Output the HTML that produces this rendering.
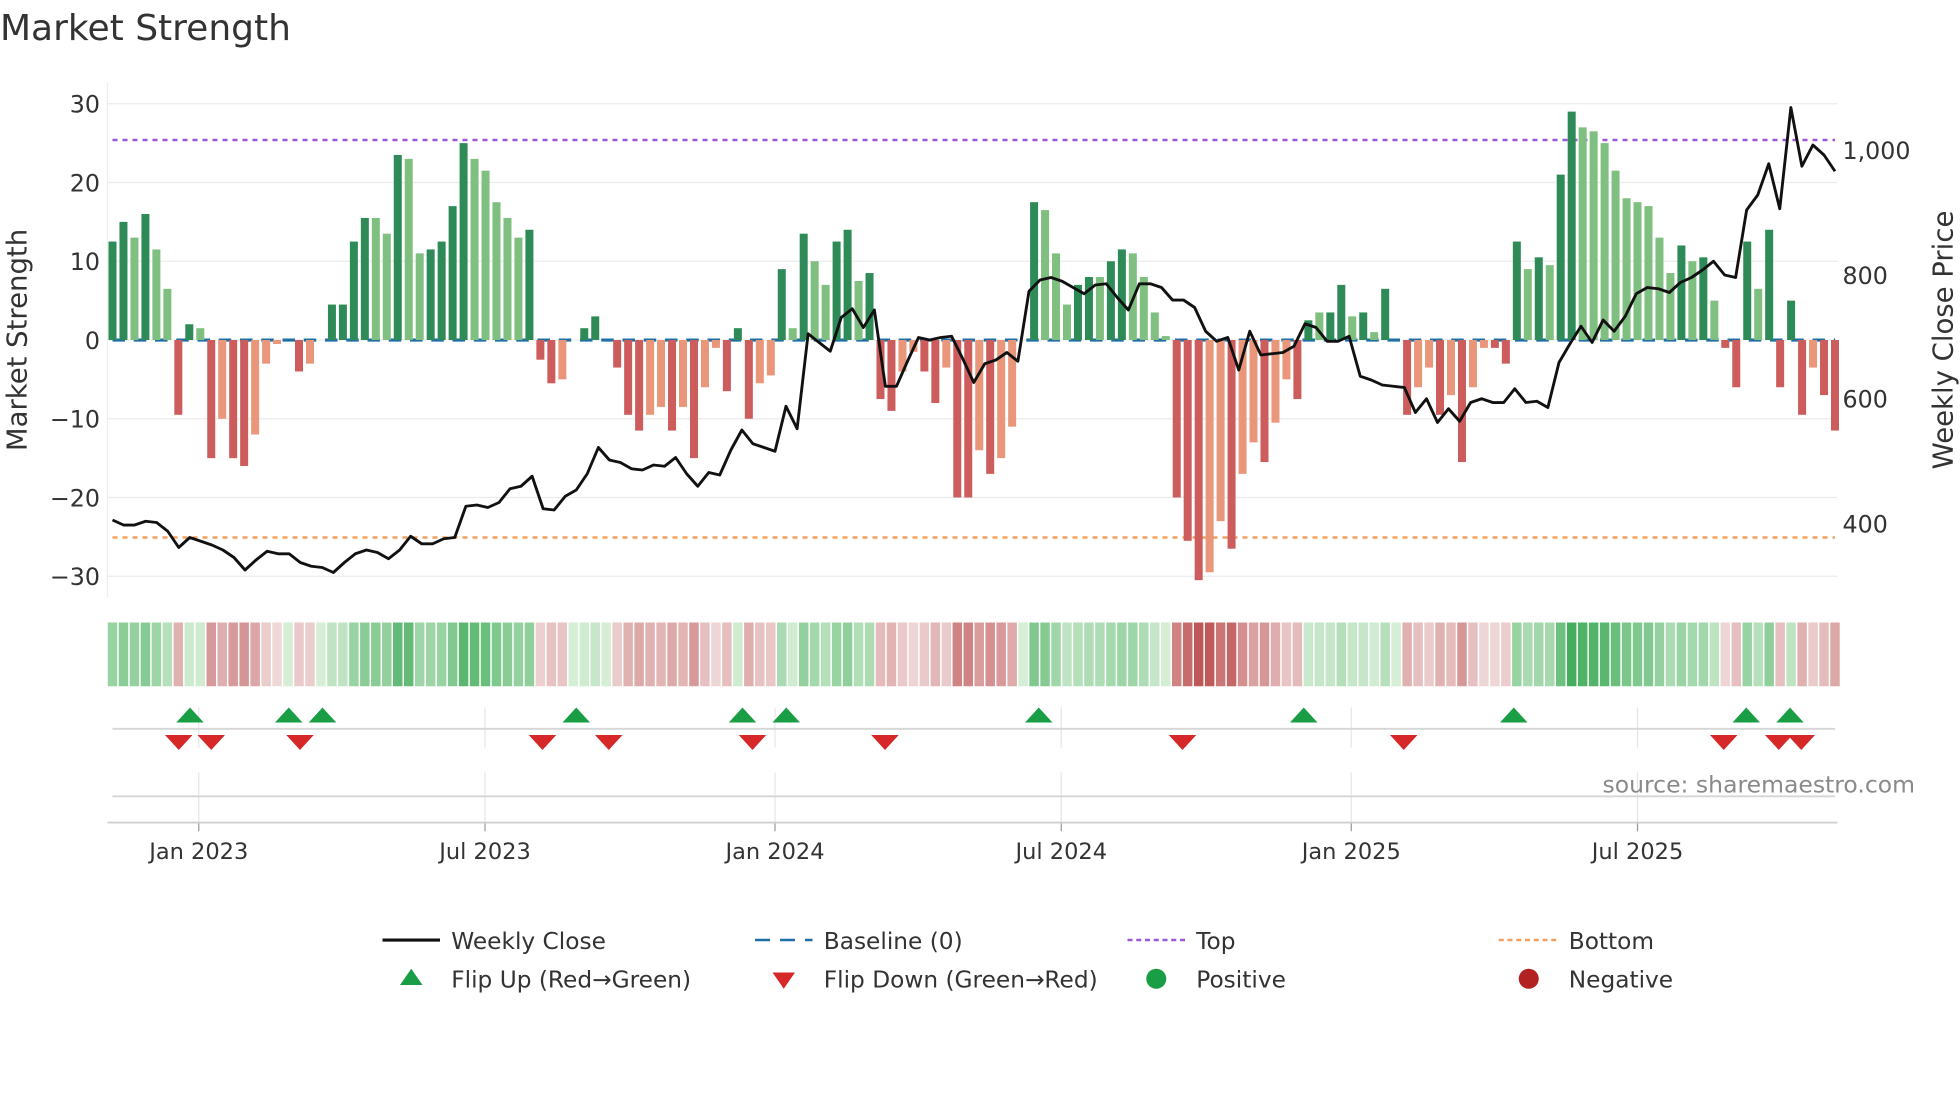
<!DOCTYPE html>
<html><head><meta charset="utf-8"><style>
html,body{margin:0;padding:0;background:#fff;width:1960px;height:1102px;overflow:hidden}
svg{display:block;font-family:"DejaVu Sans","Liberation Sans",sans-serif}
</style></head><body>
<svg id="s" width="1960" height="1102" viewBox="0 0 1568 881.6" xmlns="http://www.w3.org/2000/svg">
<text x="0" y="32" font-size="28.8" fill="#333">Market Strength</text>
<g id="g"></g>
<text x="1282" y="634" font-size="18.8" fill="#8a8a8a">source: sharemaestro.com</text>
<g font-size="18.6" fill="#333">
<line x1="306" y1="752" x2="352" y2="752" stroke="#111" stroke-width="2.5"/><text x="361" y="759">Weekly Close</text>
<line x1="604" y1="752" x2="650" y2="752" stroke="#1f6fa5" stroke-width="2" stroke-dasharray="12,8"/><text x="659" y="759">Baseline (0)</text>
<line x1="902" y1="752" x2="948" y2="752" stroke="#9b59d6" stroke-width="2" stroke-dasharray="4,3"/><text x="957" y="759">Top</text>
<line x1="1199" y1="752" x2="1245" y2="752" stroke="#f0a060" stroke-width="2" stroke-dasharray="4,3"/><text x="1255" y="759">Bottom</text>
<polygon points="320,788 338,788 329,775" fill="#1a9e45"/><text x="361" y="790">Flip Up (Red→Green)</text>
<polygon points="618,778 636,778 627,791" fill="#d62828"/><text x="659" y="790">Flip Down (Green→Red)</text>
<circle cx="925" cy="783" r="8" fill="#1a9e45"/><text x="957" y="790">Positive</text>
<circle cx="1223" cy="783" r="8" fill="#b22222"/><text x="1255" y="790">Negative</text>
</g>
</svg>
<script>
var bars=[[12.5,'d'],[15,'d'],[13,'l'],[16,'d'],[11.5,'l'],[6.5,'l'],[-9.5,'d'],[2,'d'],[1.5,'l'],[-15,'d'],[-10,'l'],[-15,'d'],[-16,'d'],[-12,'l'],[-3,'l'],[-0.5,'l'],[0,'l'],[-4,'d'],[-3,'l'],[0,'l'],[4.5,'d'],[4.5,'d'],[12.5,'d'],[15.5,'d'],[15.5,'l'],[13.5,'l'],[23.5,'d'],[23,'l'],[11,'l'],[11.5,'d'],[12.5,'d'],[17,'d'],[25,'d'],[23,'l'],[21.5,'l'],[17.5,'l'],[15.5,'l'],[13,'l'],[14,'d'],[-2.5,'d'],[-5.5,'d'],[-5,'l'],[0,'l'],[1.5,'d'],[3,'d'],[0,'l'],[-3.5,'d'],[-9.5,'d'],[-11.5,'d'],[-9.5,'l'],[-8.5,'l'],[-11.5,'d'],[-8.5,'l'],[-15,'d'],[-6,'l'],[-1,'l'],[-6.5,'d'],[1.5,'d'],[-10,'d'],[-5.5,'l'],[-4.5,'l'],[9,'d'],[1.5,'l'],[13.5,'d'],[10,'l'],[7,'l'],[12.5,'d'],[14,'d'],[7.5,'l'],[8.5,'d'],[-7.5,'d'],[-9,'d'],[-4,'l'],[-1.5,'l'],[-4,'d'],[-8,'d'],[-3.5,'l'],[-20,'d'],[-20,'d'],[-14,'l'],[-17,'d'],[-15,'l'],[-11,'l'],[0,'l'],[17.5,'d'],[16.5,'l'],[11,'l'],[4.5,'l'],[7,'d'],[8,'d'],[8,'l'],[10,'d'],[11.5,'d'],[11,'l'],[8,'l'],[3.5,'l'],[0.5,'l'],[-20,'d'],[-25.5,'d'],[-30.5,'d'],[-29.5,'l'],[-23,'l'],[-26.5,'d'],[-17,'l'],[-13,'l'],[-15.5,'d'],[-10.5,'l'],[-5,'l'],[-7.5,'d'],[2.5,'d'],[3.5,'l'],[3.5,'d'],[7,'d'],[3,'l'],[3.5,'d'],[1,'l'],[6.5,'d'],[0,'l'],[-9.5,'d'],[-6,'l'],[-3.5,'l'],[-9.5,'d'],[-7,'l'],[-15.5,'d'],[-6,'l'],[-1,'l'],[-1,'d'],[-3,'d'],[12.5,'d'],[9,'l'],[10.5,'d'],[9.5,'l'],[21,'d'],[29,'d'],[27,'l'],[26.5,'l'],[25,'l'],[21.5,'l'],[18,'l'],[17.5,'l'],[17,'l'],[13,'l'],[8.5,'l'],[12,'d'],[10,'l'],[10.5,'d'],[5,'l'],[-1,'d'],[-6,'d'],[12.5,'d'],[6.5,'l'],[14,'d'],[-6,'d'],[5,'d'],[-9.5,'d'],[-3.5,'l'],[-7,'d'],[-11.5,'d']];
var line=[416,420,420,417,418,425,438,430,433,436,440,446,456,448,441,443,443,450,453,454,458,450,443,440,442,447,440,429,435,435,431,430,405,404,406,402,391,389,381,407,408,397,392,379,358,368,370,375,376,372,373,366,379,389,378,380,360,344,355,358,361,325,343,267,274,281,254,247,262,248,309,309,289,270,272,270,269,287,306,291,288,282,289,233,224,222,225,230,235,228,227,238,248,227,227,230,240,240,246,265,273,270,296,265,284,283,282,277,259,262,273,273,269,301,304,308,309,310,330,319,338,327,337,322,319,322,322,311,322,321,326,290,275,261,274,256,265,253,235,230,231,234,226,222,216,209,220,222,168,156,131,167,86,133,116,124,137];
var n=bars.length, x0=90, x1=1468, dx=(x1-x0)/(n-1);
function X(i){return x0+i*dx}
function Y(v){return 272-v*6.3}
var h='';
[30,20,10,0,-10,-20,-30].forEach(function(v){h+='<line x1="86" x2="1470" y1="'+Y(v)+'" y2="'+Y(v)+'" stroke="#ececec" stroke-width="1"/>';
h+='<text x="80" y="'+(Y(v)+7)+'" font-size="19" fill="#333" text-anchor="end">'+(v<0?'\u2212'+(-v):v)+'</text>';});
[[1000,120,'1,000'],[800,220,'800'],[600,319,'600'],[400,419,'400']].forEach(function(a){h+='<text x="1474" y="'+(a[1]+7)+'" font-size="19" fill="#333">'+a[2]+'</text>';});
h+='<line x1="86" y1="66" x2="86" y2="478" stroke="#eee"/>';
h+='<text transform="translate(21,272) rotate(-90)" font-size="22" fill="#333" text-anchor="middle">Market Strength</text>';
h+='<text transform="translate(1562,272) rotate(-90)" font-size="22" fill="#333" text-anchor="middle">Weekly Close Price</text>';
h+='<line x1="90" x2="1468" y1="112" y2="112" stroke="#9b59d6" stroke-width="2" stroke-dasharray="4,4"/>';
h+='<line x1="90" x2="1468" y1="430" y2="430" stroke="#f0a060" stroke-width="2" stroke-dasharray="4,4"/>';
h+='<line x1="90" x2="1468" y1="272" y2="272" stroke="#1f6fa5" stroke-width="2.5" stroke-dasharray="10,7"/>';
var tcol={'dp':'#2e8b57','lp':'#7fbf7f','dn':'#cd5c5c','ln':'#e9967a'};
bars.forEach(function(b,i){var v=b[0];if(v==0)return;var c=tcol[b[1]+(v>0?'p':'n')];var y=Math.min(Y(v),272),hh=Math.abs(v*6.3);
h+='<rect x="'+(X(i)-3.2)+'" y="'+y+'" width="6.4" height="'+hh+'" fill="'+c+'"/>';
var t=Math.min(Math.abs(v)/30,1);var c2;
if(v>=0){c2='rgb('+Math.round(214-150*t)+','+Math.round(238-66*t)+','+Math.round(214-124*t)+')';}
else{c2='rgb('+Math.round(240-50*t)+','+Math.round(218-130*t)+','+Math.round(218-130*t)+')';}
h+='<rect x="'+(X(i)-dx/2+0.6)+'" y="498" width="'+(dx-1.2)+'" height="51" fill="'+c2+'"/>';});
bars.forEach(function(b,i){if(b[0]==0)h+='<rect x="'+(X(i)-dx/2+0.6)+'" y="498" width="'+(dx-1.2)+'" height="51" fill="rgb(214,238,214)"/>';});
var ldx=(x1-x0)/(line.length-1);
var p='';line.forEach(function(y,i){p+=(i?'L':'M')+(x0+i*ldx).toFixed(1)+','+y;});
h+='<path d="'+p+'" fill="none" stroke="#111" stroke-width="2.3" stroke-linejoin="round"/>';
[[159,'Jan 2023'],[388,'Jul 2023'],[620,'Jan 2024'],[849,'Jul 2024'],[1081,'Jan 2025'],[1310,'Jul 2025']].forEach(function(a){
h+='<line x1="'+a[0]+'" x2="'+a[0]+'" y1="566" y2="598" stroke="#e6e6e6"/>';
h+='<line x1="'+a[0]+'" x2="'+a[0]+'" y1="618" y2="658" stroke="#e6e6e6"/>';
h+='<line x1="'+a[0]+'" x2="'+a[0]+'" y1="658" y2="665" stroke="#999"/>';
h+='<text x="'+a[0]+'" y="687" font-size="18" fill="#333" text-anchor="middle">'+a[1]+'</text>';});
h+='<line x1="90" x2="1468" y1="583" y2="583" stroke="#d6d6d6" stroke-width="1.5"/>';
h+='<line x1="90" x2="1468" y1="637" y2="637" stroke="#d6d6d6" stroke-width="1.5"/>';
h+='<line x1="86" x2="1470" y1="658" y2="658" stroke="#d0d0d0" stroke-width="1.5"/>';
[152,231,258,461,594,629,831,1043,1211,1397,1432].forEach(function(x){h+='<polygon points="'+(x-11)+',578 '+(x+11)+',578 '+x+',566" fill="#1a9e45"/>';});
[143,169,240,434,487,602,708,946,1123,1379,1423,1441].forEach(function(x){h+='<polygon points="'+(x-11)+',588 '+(x+11)+',588 '+x+',600" fill="#d62828"/>';});
document.getElementById('g').innerHTML=h;
</script>
</body></html>
